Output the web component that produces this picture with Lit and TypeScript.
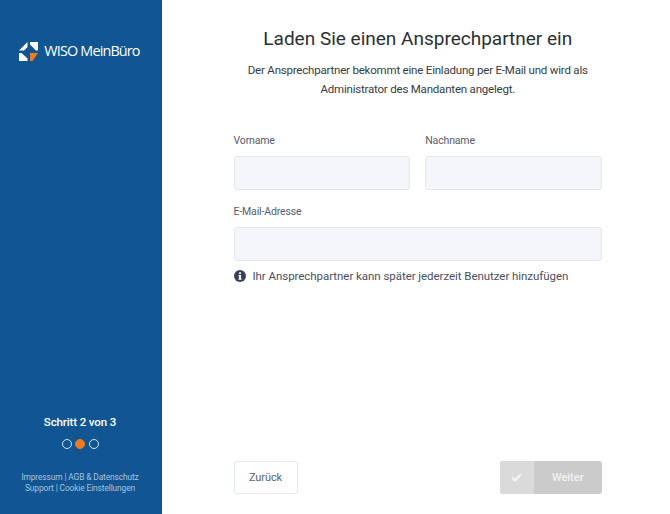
import { LitElement, html, css } from "lit";
import { customElement } from "lit/decorators.js";

@customElement("app-root")
export class AppRoot extends LitElement {
  static styles = css`
    :host { display: block; width: 670px; height: 514px; font-family: Roboto, "Noto Sans", sans-serif; }
    .page { display: flex; height: 514px; background: #fff; }
    .side { width: 162px; box-sizing: border-box; padding-right: 2px; flex: none; background: #115593; display: flex; flex-direction: column; align-items: center; color: #fff; }
    .logo { display: flex; align-items: center; gap: 6px; margin-top: 41px; height: 20px; margin-left: -1px; }
    .logo span { font-family: "Open Sans", sans-serif; font-size: 14.4px; letter-spacing: -0.85px; color: #fff; line-height: 20px; white-space: nowrap; }
    .logo b { font-weight: 400; margin-right: 3px; }
    .grow { flex: 1; }
    .step { font-size: 11.5px; font-weight: 500; line-height: 16px; margin-bottom: 9.5px; letter-spacing: -0.12px; }
    .dots { display: flex; gap: 3.5px; margin-bottom: 23px; }
    .dot { width: 10px; height: 10px; box-sizing: border-box; border-radius: 50%; border: 1px solid #d5e2ee; }
    .dot.on { background: #f07a1e; border-color: #f07a1e; }
    .links { font-size: 8.4px; line-height: 11px; color: #a5c3de; text-align: center; margin-bottom: 20px; white-space: nowrap; letter-spacing: -0.12px; }
    .main { flex: 1; display: flex; flex-direction: column; padding: 0 68px 20px 71.5px; min-width: 0; }
    h1 { margin: 26px 0 0; font-size: 19px; font-weight: 400; line-height: 26px; color: #2b2f36; text-align: center; white-space: nowrap; }
    .sub { margin: 8.5px -20px 0; font-size: 11.5px; line-height: 19.5px; color: #363b45; text-align: center; letter-spacing: -0.2px; }
    .row { display: flex; gap: 15px; margin-top: 34.5px; }
    .field { flex: 1; display: flex; flex-direction: column; min-width: 0; }
    label { font-size: 10.5px; line-height: 14px; color: #565c6e; letter-spacing: -0.15px; margin-bottom: 8px; }
    .input { height: 34px; box-sizing: border-box; background: #f4f6fb; border: 1px solid #e2e8f2; border-radius: 3px; }
    .row.second { margin-top: 15px; }
    .hint { display: flex; align-items: center; gap: 7px; margin-top: 8px; font-size: 11.5px; line-height: 14px; color: #4b5064; white-space: nowrap; letter-spacing: -0.05px; }
    .hint svg { flex: none; }
    .actions { margin-top: auto; display: flex; justify-content: space-between; }
    .back { width: 64px; height: 33.5px; box-sizing: border-box; display: flex; align-items: center; justify-content: center; border: 1px solid #e2e8f2; border-radius: 3px; font-size: 11px; color: #5b6072; background: #fff; letter-spacing: -0.1px; }
    .next { width: 102px; height: 33.5px; display: flex; border-radius: 3px; overflow: hidden; font-size: 11px; font-weight: 500; color: #f2f2f2; background: #cbcbcb; }
    .next .ic { width: 33.5px; background: #dadada; display: flex; align-items: center; justify-content: center; }
    .next .tx { flex: 1; display: flex; align-items: center; justify-content: center; }
  `;

  render() {
    return html`<div class="page">
      <aside class="side">
        <div class="logo">
          <svg width="19" height="19" viewBox="0 0 19 19">
            <path fill="#fff" d="M0 8.5 L8.5 0 V5 L5 8.5 Z"/>
            <path fill="#fff" d="M11 0 H19 V8.5 H17 L11 2.5 Z"/>
            <path fill="#fff" d="M0 11 H2.5 L8.5 16.5 V19 H0 Z"/>
            <path fill="#f07a1e" d="M11 11 H19 L13.5 19 H11 Z"/>
          </svg>
          <span><b>WISO</b>MeinBüro</span>
        </div>
        <div class="grow"></div>
        <div class="step">Schritt 2 von 3</div>
        <div class="dots"><div class="dot"></div><div class="dot on"></div><div class="dot"></div></div>
        <div class="links">Impressum | AGB &amp; Datenschutz<br />Support | Cookie Einstellungen</div>
      </aside>
      <main class="main">
        <h1>Laden Sie einen Ansprechpartner ein</h1>
        <p class="sub">Der Ansprechpartner bekommt eine Einladung per E-Mail und wird als<br />Administrator des Mandanten angelegt.</p>
        <div class="row">
          <div class="field"><label>Vorname</label><div class="input"></div></div>
          <div class="field"><label>Nachname</label><div class="input"></div></div>
        </div>
        <div class="row second">
          <div class="field"><label>E-Mail-Adresse</label><div class="input"></div></div>
        </div>
        <div class="hint">
          <svg width="12" height="12" viewBox="0 0 12 12">
            <circle cx="6" cy="6" r="6" fill="#3b4159"/>
            <rect x="5" y="2.2" width="2" height="1.9" rx=".5" fill="#fff"/>
            <path fill="#fff" d="M4.5 5 H7 V8.6 H7.6 V9.8 H4.5 V8.6 H5.1 V6.2 H4.5 Z"/>
          </svg>
          <span>Ihr Ansprechpartner kann später jederzeit Benutzer hinzufügen</span>
        </div>
        <div class="actions">
          <div class="back">Zurück</div>
          <div class="next">
            <div class="ic"><svg width="11" height="9" viewBox="0 0 11 9"><path d="M1 4.6 L4 7.4 L10 1.4" fill="none" stroke="#f4f4f4" stroke-width="2.2"/></svg></div>
            <div class="tx">Weiter</div>
          </div>
        </div>
      </main>
    </div>`;
  }
}
